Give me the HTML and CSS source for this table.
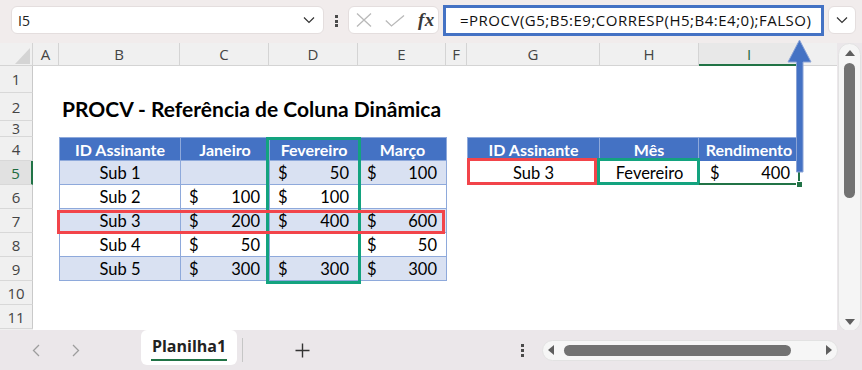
FILE: index.html
```html
<!DOCTYPE html>
<html lang="pt">
<head>
<meta charset="utf-8">
<title>PROCV</title>
<link rel="stylesheet" href="styles.css">
</head>
<body>
<div class="app">
  <div class="topbar">
    <div class="namebox">
      <span class="name">I5</span>
      <svg class="chev" width="12" height="8" viewBox="0 0 12 8"><path d="M1 1.5 L6 6.5 L11 1.5" fill="none" stroke="#333" stroke-width="1.2"/></svg>
    </div>
    <div class="vdots"><i></i><i></i><i></i></div>
    <div class="fxbox">
      <svg class="xicon" width="16" height="14" viewBox="0 0 16 14"><path d="M1 0.5 L15 13.5 M15 0.5 L1 13.5" stroke="#b9b9b9" stroke-width="1.3" fill="none"/></svg>
      <svg class="check" width="20" height="12" viewBox="0 0 20 12"><path d="M0.8 5.5 L6.5 11 L19 0.5" stroke="#b9b9b9" stroke-width="1.3" fill="none"/></svg>
      <span class="fx">fx</span>
    </div>
    <div class="formula">=PROCV(G5;B5:E9;CORRESP(H5;B4:E4;0);FALSO)</div>
    <div class="expand">
      <svg width="12" height="8" viewBox="0 0 12 8"><path d="M1 1.5 L6 6.5 L11 1.5" fill="none" stroke="#333" stroke-width="1.2"/></svg>
    </div>
  </div>

  <div class="main">
    <div class="sheet">
      <div class="colheads">
        <div class="corner"><svg width="33" height="23" viewBox="0 0 33 23"><polygon points="15,21 30,5 30,21" fill="#d4d4d4"/></svg></div>
        <div class="ch wA">A</div>
        <div class="ch wB">B</div>
        <div class="ch wC">C</div>
        <div class="ch wD">D</div>
        <div class="ch wE">E</div>
        <div class="ch wF">F</div>
        <div class="ch wG">G</div>
        <div class="ch wH">H</div>
        <div class="ch wI sel">I</div>
        <div class="ch wJ"></div>
      </div>
      <div class="body">
        <div class="rowheads">
          <div class="rh r1">1</div>
          <div class="rh r2">2</div>
          <div class="rh r3">3</div>
          <div class="rh">4</div>
          <div class="rh sel">5</div>
          <div class="rh">6</div>
          <div class="rh">7</div>
          <div class="rh">8</div>
          <div class="rh">9</div>
          <div class="rh">10</div>
          <div class="rh">11</div>
        </div>
        <div class="grid">
          <div class="title">PROCV - Referência de Coluna Dinâmica</div>

          <div class="tbl tl">
            <div class="hd">ID Assinante</div><div class="hd">Janeiro</div><div class="hd">Fevereiro</div><div class="hd">Março</div>
            <div class="c odd ctr">Sub 1</div><div class="c odd"></div><div class="c odd cur"><span>$</span><span>50</span></div><div class="c odd cur"><span>$</span><span>100</span></div>
            <div class="c ctr">Sub 2</div><div class="c cur"><span>$</span><span>100</span></div><div class="c cur"><span>$</span><span>100</span></div><div class="c"></div>
            <div class="c odd ctr">Sub 3</div><div class="c odd cur"><span>$</span><span>200</span></div><div class="c odd cur"><span>$</span><span>400</span></div><div class="c odd cur"><span>$</span><span>600</span></div>
            <div class="c ctr">Sub 4</div><div class="c cur"><span>$</span><span>50</span></div><div class="c"></div><div class="c cur"><span>$</span><span>50</span></div>
            <div class="c odd ctr">Sub 5</div><div class="c odd cur"><span>$</span><span>300</span></div><div class="c odd cur"><span>$</span><span>300</span></div><div class="c odd cur"><span>$</span><span>300</span></div>
          </div>

          <div class="tbl tr">
            <div class="hd">ID Assinante</div><div class="hd">Mês</div><div class="hd">Rendimento</div>
            <div class="v ctr">Sub 3</div><div class="v ctr">Fevereiro</div><div class="v cur2"><span>$</span><span>400</span></div>
          </div>

          <div class="box green colD"></div>
          <div class="box red row7"></div>
          <div class="box red g5"></div>
          <div class="box green h5"></div>
          <div class="selection"></div>
          <div class="handle"></div>
        </div>
      </div>
    </div>
    <div class="vscroll">
      <div class="vtrack">
        <span class="tri up"></span>
        <span class="vthumb"></span>
        <span class="tri down"></span>
      </div>
    </div>
  </div>

  <div class="bottombar">
    <svg class="nav first" width="8" height="13" viewBox="0 0 8 13"><path d="M7 1 L1.5 6.5 L7 12" fill="none" stroke="#9d9d9d" stroke-width="1.3"/></svg>
    <svg class="nav second" width="8" height="13" viewBox="0 0 8 13"><path d="M1 1 L6.5 6.5 L1 12" fill="none" stroke="#9d9d9d" stroke-width="1.3"/></svg>
    <div class="tab"><span>Planilha1</span></div>
    <div class="sep"></div>
    <svg class="plus" width="15" height="15" viewBox="0 0 15 15"><path d="M7.5 0.5 V14.5 M0.5 7.5 H14.5" stroke="#333" stroke-width="1.4"/></svg>
    <div class="bdots"><i></i><i></i><i></i></div>
    <div class="htrack">
      <span class="tri left"></span>
      <span class="hthumb"></span>
      <span class="tri right"></span>
    </div>
  </div>

  <svg class="arrow" width="40" height="145" viewBox="0 0 40 145">
    <path d="M19.5 6 L31 28 L23 28 L23 138 L16.5 138 L16.5 28 L8 28 Z" fill="#4472c4" stroke="#8aa3d6" stroke-width="1" stroke-linejoin="round"/>
  </svg>
</div>
</body>
</html>
```

FILE: styles.css
```css
* { box-sizing: border-box; }
body { margin: 0; background: #ffffff; }

.app {
  position: relative;
  width: 862px;
  height: 370px;
  overflow: hidden;
  font-family: "Open Sans", "Noto Sans", sans-serif;
  color: #222;
  background: #ebe7ea;
}

/* ---------- top formula bar ---------- */
.topbar {
  height: 43px;
  display: flex;
  align-items: flex-start;
  padding: 6px 0 0 11px;
  background: #f1ecec;
}
.namebox {
  width: 313px;
  height: 28px;
  background: #fff;
  border: 1px solid #e4dede;
  border-radius: 6px;
  display: flex;
  align-items: center;
  justify-content: space-between;
  padding: 0 8px 0 6px;
}
.name { font-size: 14px; color: #222; }
.vdots {
  margin-left: 11px;
  margin-top: 9px;
  display: flex;
  flex-direction: column;
  gap: 1.5px;
}
.vdots i, .bdots i {
  display: block;
  width: 3px;
  height: 3px;
  background: #4a4a4a;
}
.fxbox {
  margin-left: 10px;
  width: 91px;
  height: 28px;
  background: #fff;
  border: 1px solid #e4dede;
  border-radius: 6px;
  display: flex;
  align-items: center;
  padding-left: 7px;
}
.check { margin-left: 13px; margin-top: 2px; }
.fx {
  margin-left: 13px;
  font-family: "Liberation Serif", "DejaVu Serif", serif;
  font-style: italic;
  font-weight: bold;
  font-size: 19px;
  color: #3a3a3a;
  letter-spacing: 0.5px;
}
.formula {
  margin-left: 4px;
  margin-top: -1px;
  width: 381px;
  height: 31px;
  border: 3px solid #4472c4;
  background: #fff;
  padding-left: 14px;
  font-size: 15px;
  line-height: 25px;
  color: #111;
  white-space: nowrap;
  letter-spacing: 0.5px;
}
.expand {
  margin-left: 4px;
  width: 28px;
  height: 28px;
  background: #fff;
  border: 1px solid #e4dede;
  border-radius: 6px;
  display: flex;
  align-items: center;
  justify-content: center;
}

/* ---------- sheet ---------- */
.main { display: flex; height: 287px; }
.sheet { width: 837px; display: flex; flex-direction: column; background: #fff; }

.colheads {
  height: 23px;
  display: flex;
  background: #f0f0f0;
  border-bottom: 1px solid #d4d4d4;
}
.corner { width: 33px; border-right: 1px solid #d4d4d4; }
.corner svg { display: block; }
.ch {
  border-right: 1px solid #d4d4d4;
  display: flex;
  align-items: center;
  justify-content: center;
  font-size: 15px;
  color: #444;
}
.ch.sel {
  color: #1e6b40;
  background: #e8e8e8;
  border-bottom: 2px solid #217346;
  margin-bottom: -1px;
}
.wA { width: 26px; } .wB { width: 121px; } .wC { width: 89px; } .wD { width: 89px; }
.wE { width: 88px; } .wF { width: 21px; } .wG { width: 133px; } .wH { width: 99px; }
.wI { width: 101px; } .wJ { width: 37px; border-right: none; }

.body { display: flex; height: 264px; }
.rowheads { width: 33px; display: flex; flex-direction: column; background: #f0f0f0; }
.rh {
  height: 24px;
  border-bottom: 1px solid #d8d8d8;
  border-right: 1px solid #c9c9c9;
  display: flex;
  align-items: center;
  justify-content: center;
  font-size: 15px;
  color: #444;
}
.rh.r1 { height: 27px; }
.rh.r2 { height: 28px; }
.rh.r3 { height: 16px; font-size: 14px; line-height: 15px; }
.rh.sel { background: #e1e1e1; color: #1e6b40; border-right: 2px solid #217346; }

.grid {
  position: relative;
  display: grid;
  grid-template-columns: 26px 121px 89px 89px 88px 21px 133px 99px 101px 37px;
  grid-template-rows: 27px 28px 16px repeat(8, 24px);
  background: #fff;
  font-family: "Lato", "Open Sans", sans-serif;
  color: #000;
}
.title {
  grid-column: 2 / 10;
  grid-row: 2;
  font-weight: bold;
  font-size: 21px;
  padding-left: 3px;
  display: flex;
  align-items: center;
  padding-top: 2px;
  white-space: nowrap;
}

.tbl { display: grid; grid-auto-rows: 24px; font-size: 16.5px; }
.tl {
  grid-column: 2 / 6;
  grid-row: 4 / 10;
  grid-template-columns: 121px 89px 89px 88px;
  border-left: 1px solid #8ea9db;
}
.tr {
  grid-column: 7 / 10;
  grid-row: 4 / 6;
  grid-template-columns: 133px 99px 101px;
}
.hd {
  background: #4472c4;
  color: #fff;
  font-weight: bold;
  font-size: 16px;
  display: flex;
  align-items: center;
  justify-content: center;
  border-right: 1px solid #8ea9db;
  border-top: 1px solid #8ea9db;
  white-space: nowrap;
}
.tr .hd:first-child { border-left: 1px solid #8ea9db; }
.tr .hd:last-child { border-right: none; }
.c {
  border-right: 1px solid #8ea9db;
  border-bottom: 1px solid #8ea9db;
  display: flex;
  align-items: center;
}
.tl .hd { border-bottom: 1px solid #8ea9db; }
.odd { background: #d9e1f2; }
.ctr { justify-content: center; }
.cur { justify-content: space-between; padding: 0 9px 0 8px; }
.v { display: flex; align-items: center; }
.cur2 { justify-content: space-between; padding: 0 10px 0 11px; }

/* overlays drawn over the cells */
.box { position: absolute; border: 3px solid; pointer-events: none; }
.green { border-color: #13a37f; }
.red { border-color: #f2444a; }
.colD { left: 233px; top: 71px; width: 95px; height: 147px; }
.row7 { left: 24px; top: 144px; width: 388px; height: 24px; }
.g5 { left: 434px; top: 92px; width: 130px; height: 27px; }
.h5 { left: 564px; top: 92px; width: 103px; height: 27px; }
.selection {
  position: absolute;
  left: 666px;
  top: 95px;
  width: 101px;
  height: 24px;
  border-right: 2px solid #217346;
  border-bottom: 2px solid #217346;
}
.handle {
  position: absolute;
  left: 763px;
  top: 115px;
  width: 7px;
  height: 7px;
  background: #217346;
  border: 1px solid #fff;
}

/* ---------- vertical scrollbar ---------- */
.vscroll { width: 25px; background: #ebe7ea; padding-left: 1px; }
.vtrack {
  width: 23px;
  height: 289px;
  background: #f5f5f5;
  border: 1px solid #e2e2e2;
  border-radius: 12px;
  display: flex;
  flex-direction: column;
  align-items: center;
  padding-top: 6px;
}
.tri { display: block; width: 0; height: 0; border-style: solid; }
.tri.up { border-width: 0 5px 6px 5px; border-color: transparent transparent #5e5e5e transparent; }
.tri.down { border-width: 6px 5px 0 5px; border-color: #5e5e5e transparent transparent transparent; margin-top: 121px; }
.vthumb { display: block; width: 11px; height: 135px; margin-top: 7px; background: #727272; border-radius: 6px; }

/* ---------- bottom bar ---------- */
.bottombar {
  position: relative;
  height: 40px;
  display: flex;
  align-items: center;
  background: #ebe7ea;
}
.nav.first { margin-left: 32px; }
.nav.second { margin-left: 32px; }
.tab {
  align-self: flex-start;
  margin-left: 61px;
  width: 96px;
  height: 35px;
  background: #fff;
  border-radius: 6px;
  display: flex;
  justify-content: center;
  padding-top: 5px;
}
.tab span {
  font-weight: bold;
  font-size: 16px;
  line-height: 22px;
  height: 26px;
  padding: 0 1px 2px;
  color: #222;
  border-bottom: 2px solid #217346;
}
.sep { margin-left: 5px; width: 1px; height: 24px; background: #c6c6c6; }
.plus { margin-left: 52px; }
.bdots { margin-left: 211px; display: flex; flex-direction: column; gap: 2px; }
.htrack {
  margin-left: 18px;
  width: 296px;
  height: 21px;
  background: #f6f6f6;
  border: 1px solid #e2e2e2;
  border-radius: 11px;
  display: flex;
  align-items: center;
  padding-left: 5px;
}
.tri.left { border-width: 5px 6px 5px 0; border-color: transparent #5e5e5e transparent transparent; }
.hthumb { display: block; width: 227px; height: 11px; margin-left: 10px; background: #727272; border-radius: 6px; }
.tri.right { border-width: 5px 0 5px 6px; border-color: transparent transparent transparent #5e5e5e; margin-left: 35px; }

/* arrow shape lying over the formula bar and sheet */
.arrow { position: absolute; left: 780px; top: 34px; }
```
